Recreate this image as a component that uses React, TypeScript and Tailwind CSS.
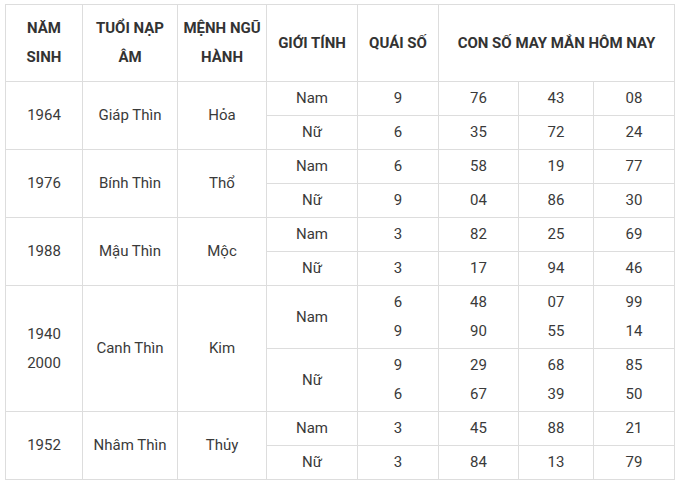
import React from 'react';

type Row = {
  year: string[];
  napAm: string;
  menh: string;
  groups: { gender: string; quai: string[]; nums: string[][] }[];
};

const rows: Row[] = [
  {
    year: ['1964'],
    napAm: 'Giáp Thìn',
    menh: 'Hỏa',
    groups: [
      { gender: 'Nam', quai: ['9'], nums: [['76'], ['43'], ['08']] },
      { gender: 'Nữ', quai: ['6'], nums: [['35'], ['72'], ['24']] },
    ],
  },
  {
    year: ['1976'],
    napAm: 'Bính Thìn',
    menh: 'Thổ',
    groups: [
      { gender: 'Nam', quai: ['6'], nums: [['58'], ['19'], ['77']] },
      { gender: 'Nữ', quai: ['9'], nums: [['04'], ['86'], ['30']] },
    ],
  },
  {
    year: ['1988'],
    napAm: 'Mậu Thìn',
    menh: 'Mộc',
    groups: [
      { gender: 'Nam', quai: ['3'], nums: [['82'], ['25'], ['69']] },
      { gender: 'Nữ', quai: ['3'], nums: [['17'], ['94'], ['46']] },
    ],
  },
  {
    year: ['1940', '2000'],
    napAm: 'Canh Thìn',
    menh: 'Kim',
    groups: [
      { gender: 'Nam', quai: ['6', '9'], nums: [['48', '90'], ['07', '55'], ['99', '14']] },
      { gender: 'Nữ', quai: ['9', '6'], nums: [['29', '67'], ['68', '39'], ['85', '50']] },
    ],
  },
  {
    year: ['1952'],
    napAm: 'Nhâm Thìn',
    menh: 'Thủy',
    groups: [
      { gender: 'Nam', quai: ['3'], nums: [['45'], ['88'], ['21']] },
      { gender: 'Nữ', quai: ['3'], nums: [['84'], ['13'], ['79']] },
    ],
  },
];

const td = 'border border-[#dddddd] text-center align-middle p-0';

function Lines({ items }: { items: string[] }) {
  return (
    <>
      {items.map((t, i) => (
        <div key={i}>{t}</div>
      ))}
    </>
  );
}

export default function App() {
  return (
    <div className="bg-white w-[677px] h-[483px] pt-[4px] pl-[5px] font-['Roboto','Liberation_Sans',sans-serif] text-[15px] leading-[29px] text-[#3a3a3a]">
      <table className="border-collapse table-fixed w-[669px]">
        <colgroup>
          <col className="w-[77px]" />
          <col className="w-[95px]" />
          <col className="w-[89px]" />
          <col className="w-[91px]" />
          <col className="w-[81px]" />
          <col className="w-[80px]" />
          <col className="w-[75px]" />
          <col className="w-[81px]" />
        </colgroup>
        <thead>
          <tr className="h-[77px] font-bold text-[#333333]">
            <th className={td}>
              NĂM
              <br />
              SINH
            </th>
            <th className={td}>
              TUỔI NẠP
              <br />
              ÂM
            </th>
            <th className={td}>
              MỆNH NGŨ
              <br />
              HÀNH
            </th>
            <th className={td}>GIỚI TÍNH</th>
            <th className={td}>QUÁI SỐ</th>
            <th className={td} colSpan={3}>
              CON SỐ MAY MẮN HÔM NAY
            </th>
          </tr>
        </thead>
        <tbody>
          {rows.map((r) =>
            r.groups.map((g, gi) => {
              const tall = g.quai.length > 1;
              return (
                <tr key={r.napAm + gi} className={tall ? 'h-[63px]' : 'h-[34px]'}>
                  {gi === 0 && (
                    <>
                      <td className={td} rowSpan={2}>
                        <Lines items={r.year} />
                      </td>
                      <td className={td} rowSpan={2}>
                        {r.napAm}
                      </td>
                      <td className={td} rowSpan={2}>
                        {r.menh}
                      </td>
                    </>
                  )}
                  <td className={td}>{g.gender}</td>
                  <td className={td}>
                    <Lines items={g.quai} />
                  </td>
                  {g.nums.map((n, ni) => (
                    <td key={ni} className={td}>
                      <Lines items={n} />
                    </td>
                  ))}
                </tr>
              );
            })
          )}
        </tbody>
      </table>
    </div>
  );
}
